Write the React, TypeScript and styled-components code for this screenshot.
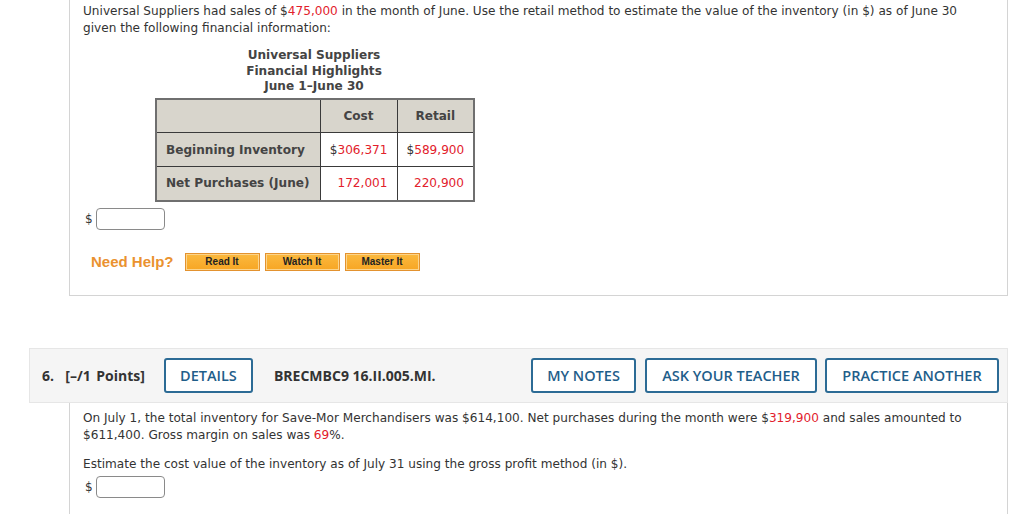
import React from "react";
import styled, { createGlobalStyle } from "styled-components";

const GlobalStyle = createGlobalStyle`
  html, body {
    margin: 0;
    padding: 0;
    background: #fff;
    overflow: hidden;
  }
`;

const Page = styled.div`
  width: 1024px;
  height: 514px;
  overflow: hidden;
`;

const QuestionBody = styled.div<{ $top?: number }>`
  margin-left: 69px;
  width: 939px;
  box-sizing: border-box;
  border-left: 1px solid #d4d4d4;
  border-right: 1px solid #d4d4d4;
  padding: ${(p) => p.$top ?? 3}px 13px 0 13px;
  font-family: "DejaVu Sans", Verdana, sans-serif;
  font-size: 12.1px;
  color: #333;
`;

const FirstBody = styled(QuestionBody)`
  border-bottom: 1px solid #d4d4d4;
  padding-bottom: 24px;
`;

const Para = styled.p<{ $mt?: number }>`
  margin: ${(p) => p.$mt ?? 0}px 0 0 0;
  line-height: 17px;
`;

const Red = styled.span`
  color: #e2202b;
`;

const TableBlock = styled.div`
  margin: 11px 0 0 72px;
  width: 318px;
`;

const Caption = styled.div`
  text-align: center;
  font-weight: bold;
  line-height: 15.5px;
  color: #444;
`;

const Table = styled.table`
  margin-top: 3px;
  border-collapse: collapse;
  border: 2px solid #6f6f6f;
  width: 318px;
  table-layout: fixed;
`;

const Cell = styled.td<{ $head?: boolean; $align?: string }>`
  height: 34px;
  padding: 0 9px;
  border: 1px solid #3a3a3a;
  background: ${(p) => (p.$head ? "#d8d5cc" : "#fff")};
  font-weight: ${(p) => (p.$head ? "bold" : "normal")};
  text-align: ${(p) => p.$align ?? "left"};
  color: ${(p) => (p.$head ? "#444" : "#333")};
  white-space: nowrap;
  box-sizing: border-box;
`;

const AnswerRow = styled.div<{ $mt?: number }>`
  display: flex;
  align-items: center;
  gap: 3px;
  margin-top: ${(p) => p.$mt ?? 0}px;
  padding-left: 2px;
`;

const Dollar = styled.span`
  font-size: 12px;
  color: #333;
`;

const AnswerInput = styled.div`
  width: 69px;
  height: 22px;
  box-sizing: border-box;
  border: 1px solid #8a8a8a;
  border-radius: 4px;
  background: #fff;
`;

const HelpRow = styled.div`
  display: flex;
  align-items: center;
  margin-top: 23px;
  padding-left: 8px;
  gap: 5px;
`;

const NeedHelp = styled.span`
  font-family: "Liberation Sans", Arial, sans-serif;
  font-weight: bold;
  font-size: 15px;
  color: #ea922f;
  margin-right: 6px;
`;

const HelpButton = styled.div`
  width: 75px;
  height: 18px;
  box-sizing: border-box;
  border: 1px solid #e3922f;
  box-shadow: inset 0 0 0 1px #fcd48a;
  background: linear-gradient(#fbb93f, #f7a624);
  font-family: "Liberation Sans", Arial, sans-serif;
  font-weight: bold;
  font-size: 10px;
  color: #222;
  display: flex;
  align-items: center;
  justify-content: center;
`;

const Header = styled.div`
  margin: 52px 0 0 29px;
  width: 979px;
  height: 55px;
  box-sizing: border-box;
  background: #f5f5f5;
  border: 1px solid #e6e6e6;
  display: flex;
  align-items: center;
  padding: 0 8px 0 12px;
  font-family: "Open Sans", sans-serif;
  color: #333;
`;

const Points = styled.span`
  font-weight: bold;
  font-size: 14px;
  word-spacing: 2px;
`;

const OutlineButton = styled.div<{ $w: number; $ml?: number }>`
  width: ${(p) => p.$w}px;
  height: 35px;
  margin-left: ${(p) => p.$ml ?? 9}px;
  box-sizing: border-box;
  border: 2px solid #2c6b95;
  border-radius: 3px;
  background: #fff;
  color: #1f5e8a;
  font-family: "Open Sans", sans-serif;
  font-weight: 600;
  font-size: 14.5px;
  display: flex;
  align-items: center;
  justify-content: center;
`;

const Code = styled.span`
  margin-left: 21px;
  font-weight: bold;
  font-size: 14px;
`;

const Spacer = styled.div`
  flex: 1;
`;

const rows = [
  { label: "Beginning Inventory", cost: "306,371", retail: "589,900", dollar: true },
  { label: "Net Purchases (June)", cost: "172,001", retail: "220,900", dollar: false },
];

export default function App() {
  return (
    <Page>
      <GlobalStyle />
      <FirstBody>
        <Para>
          Universal Suppliers had sales of $<Red>475,000</Red> in the month of June. Use the retail method to estimate the value of the inventory (in $) as of June 30 given the following financial information:
        </Para>
        <TableBlock>
          <Caption>
            Universal Suppliers
            <br />
            Financial Highlights
            <br />
            June 1–June 30
          </Caption>
          <Table>
            <colgroup>
              <col style={{ width: 164 }} />
              <col style={{ width: 77 }} />
              <col style={{ width: 77 }} />
            </colgroup>
            <tbody>
              <tr>
                <Cell $head></Cell>
                <Cell $head $align="center">Cost</Cell>
                <Cell $head $align="center">Retail</Cell>
              </tr>
              {rows.map((r) => (
                <tr key={r.label}>
                  <Cell $head>{r.label}</Cell>
                  <Cell $align="right">
                    {r.dollar && "$"}
                    <Red>{r.cost}</Red>
                  </Cell>
                  <Cell $align="right">
                    {r.dollar && "$"}
                    <Red>{r.retail}</Red>
                  </Cell>
                </tr>
              ))}
            </tbody>
          </Table>
        </TableBlock>
        <AnswerRow $mt={6}>
          <Dollar>$</Dollar>
          <AnswerInput />
        </AnswerRow>
        <HelpRow>
          <NeedHelp>Need Help?</NeedHelp>
          <HelpButton>Read It</HelpButton>
          <HelpButton>Watch It</HelpButton>
          <HelpButton>Master It</HelpButton>
        </HelpRow>
      </FirstBody>

      <Header>
        <Points>6.&nbsp; [–/1 Points]</Points>
        <OutlineButton $w={89} $ml={19}>DETAILS</OutlineButton>
        <Code>BRECMBC9 16.II.005.MI.</Code>
        <Spacer />
        <OutlineButton $w={105}>MY NOTES</OutlineButton>
        <OutlineButton $w={172}>ASK YOUR TEACHER</OutlineButton>
        <OutlineButton $w={174} $ml={8}>PRACTICE ANOTHER</OutlineButton>
      </Header>
      <QuestionBody $top={7}>
        <Para>
          On July 1, the total inventory for Save-Mor Merchandisers was $614,100. Net purchases during the month were $<Red>319,900</Red> and sales amounted to $611,400. Gross margin on sales was <Red>69</Red>%.
        </Para>
        <Para $mt={12}>Estimate the cost value of the inventory as of July 31 using the gross profit method (in $).</Para>
        <AnswerRow $mt={3}>
          <Dollar>$</Dollar>
          <AnswerInput />
        </AnswerRow>
        <div style={{ height: 40 }} />
      </QuestionBody>
    </Page>
  );
}
